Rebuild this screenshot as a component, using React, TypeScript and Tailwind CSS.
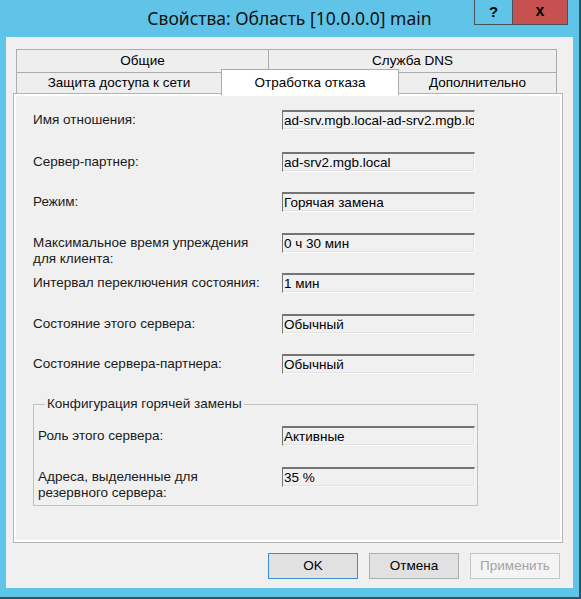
const rows = [
  { label: ["Имя отношения:"], value: "ad-srv.mgb.local-ad-srv2.mgb.local", mt: "mt-0" },
  { label: ["Сервер-партнер:"], value: "ad-srv2.mgb.local", mt: "mt-[22px]" },
  { label: ["Режим:"], value: "Горячая замена", mt: "mt-[20px]" },
  { label: ["Максимальное время упреждения", "для клиента:"], value: "0 ч 30 мин", mt: "mt-[21px]" },
  { label: ["Интервал переключения состояния:"], value: "1 мин", mt: "mt-[20px]" },
  { label: ["Состояние этого сервера:"], value: "Обычный", mt: "mt-[21px]" },
  { label: ["Состояние сервера-партнера:"], value: "Обычный", mt: "mt-[20px]" },
];

const groupRows = [
  { label: ["Роль этого сервера:"], value: "Активные", mt: "mt-[14px]" },
  { label: ["Адреса, выделенные для", "резервного сервера:"], value: "35 %", mt: "mt-[21px]" },
];

function Field({ value }: { value: string }) {
  return (
    <div className="w-[193px] h-[20px] shrink-0 overflow-hidden whitespace-nowrap border-t-2 border-l border-b border-r border-t-[#747474] border-l-[#747474] border-b-[#fafafa] border-r-[#fafafa] shadow-[inset_0_-1px_0_#e3e3e3,inset_-1px_0_0_#e3e3e3] pl-[1px] leading-[17px] text-black">
      {value}
    </div>
  );
}

function Row({ label, value, mt, labelWidth }: { label: string[]; value: string; mt: string; labelWidth: string }) {
  return (
    <div className={`flex h-[20px] items-start ${mt}`}>
      <div className={`${labelWidth} shrink-0 pt-[2px] leading-[16px] text-[#1a1a1a] whitespace-nowrap`}>
        {label.map((l) => (
          <div key={l}>{l}</div>
        ))}
      </div>
      <Field value={value} />
    </div>
  );
}

export default function App() {
  return (
    <div className="w-[581px] h-[599px] bg-[#5fc4e8] border-r-2 border-b-2 border-[#2f5564] flex flex-col font-['Liberation_Sans',Arial,sans-serif] text-[13.5px]">
      {/* title bar */}
      <div className="h-[37px] grid grid-cols-[1fr_auto_1fr] shrink-0">
        <div />
        <div className="pt-[6px] font-['Noto_Sans',sans-serif] text-[17.5px] leading-[24px] text-[#111] whitespace-nowrap">
          Свойства: Область [10.0.0.0] main
        </div>
        <div className="flex justify-end items-start pr-[11px]">
          <div className="w-[38px] h-[25px] border-l border-b border-[#4a5257] flex items-center justify-center font-bold text-[15px] text-black">
            ?
          </div>
          <div className="w-[56px] h-[25px] bg-[#c75050] border-l border-r border-b border-[#4a5257] flex items-center justify-center font-bold text-[16px] text-black leading-none pb-[2px]">
            x
          </div>
        </div>
      </div>

      {/* client area */}
      <div className="mx-[6px] h-[551px] bg-[#f0f0f0] pt-[12px] pl-[7px] pr-[10px] flex flex-col">
        {/* tabs row 1 */}
        <div className="mx-[3px] flex h-[23px]">
          <div className="w-[252px] border-t border-l border-[#acacac] bg-[#eeeeee] flex items-center justify-center text-black">
            Общие
          </div>
          <div className="w-[289px] border-t border-l border-r border-[#acacac] bg-[#eeeeee] flex items-center justify-center text-black">
            Служба DNS
          </div>
        </div>
        {/* tabs row 2 */}
        <div className="mx-[3px] flex h-[21px] items-end">
          <div className="w-[205px] h-[21px] border-t border-l border-[#acacac] bg-[#eeeeee] flex items-center justify-center text-black">
            Защита доступа к сети
          </div>
          <div className="relative z-10 w-[178px] h-[26px] -mb-[2px] border-t border-l border-r border-[#acacac] bg-white flex items-start justify-center pt-[3px] text-black">
            Отработка отказа
          </div>
          <div className="w-[158px] h-[21px] border-t border-r border-[#acacac] bg-[#eeeeee] flex items-center justify-center text-black">
            Дополнительно
          </div>
        </div>

        {/* tab page */}
        <div className="h-[450px] border border-[#b4b4b4] bg-[#f0f0f0] shadow-[inset_0_0_0_2px_#ffffff] pt-[16px] pl-[19px]">
          {rows.map((r) => (
            <Row key={r.label[0]} label={r.label} value={r.value} mt={r.mt} labelWidth="w-[249px]" />
          ))}

          <fieldset className="mt-[22px] w-[445px] border border-[#c2c2c2] pb-[18px] pl-[4px]">
            <legend className="ml-[7px] px-[2px] leading-[16px] text-[#1a1a1a]">Конфигурация горячей замены</legend>
            {groupRows.map((r) => (
              <Row key={r.label[0]} label={r.label} value={r.value} mt={r.mt} labelWidth="w-[244px]" />
            ))}
          </fieldset>
        </div>

        {/* buttons */}
        <div className="mt-[10px] mr-[3px] flex justify-end gap-[11px]">
          <button className="w-[90px] h-[26px] bg-[#e1e1e1] border border-[#3c8ed0] text-black">OK</button>
          <button className="w-[90px] h-[26px] bg-[#e1e1e1] border border-[#adadad] text-black">Отмена</button>
          <button className="w-[90px] h-[26px] bg-[#f4f4f4] border border-[#c6c6c6] text-[#a3a3a3]">Применить</button>
        </div>
      </div>
    </div>
  );
}
